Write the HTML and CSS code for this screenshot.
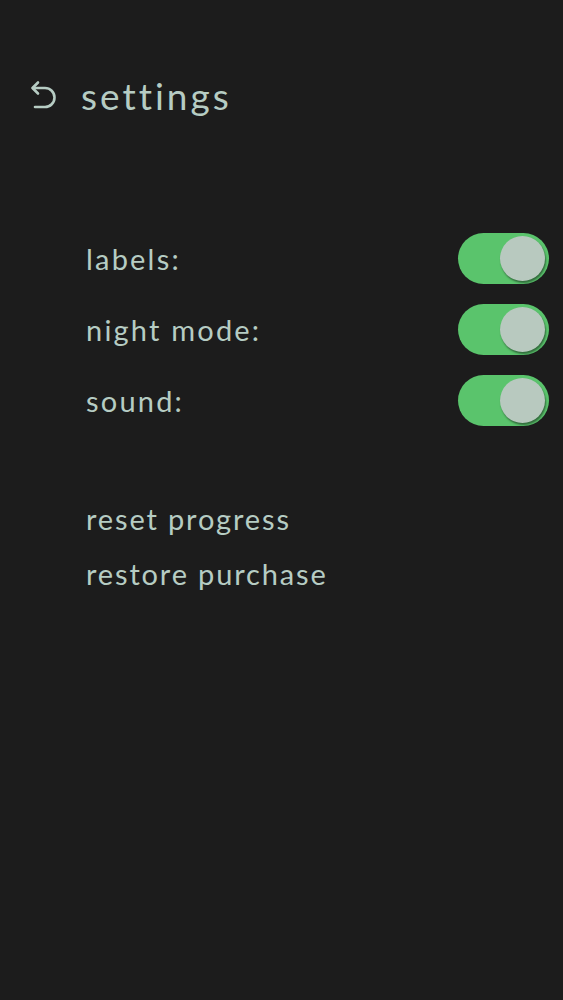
FILE: index.html
```html
<!DOCTYPE html>
<html>
<head>
<meta charset="utf-8">
<title>settings</title>
<link rel="stylesheet" href="styles.css">
</head>
<body>
<div class="screen">
	<div class="head">
		<a href="javascript:;" class="back">
			<svg width="30" height="32" viewBox="0 0 30 32">
				<path d="M4 8 H16 A9.5 9.5 0 0 1 16 27 H6" />
				<path d="M9 2.5 L3.5 8 L9 13.5" />
			</svg>
		</a>
		<h1 class="title">settings</h1>
	</div>

	<ul class="opts">
		<li class="opt">
			<span class="label">labels:</span>
			<span class="switch on"><i></i></span>
		</li>
		<li class="opt">
			<span class="label">night mode:</span>
			<span class="switch on"><i></i></span>
		</li>
		<li class="opt">
			<span class="label">sound:</span>
			<span class="switch on"><i></i></span>
		</li>
	</ul>

	<ul class="links">
		<li><a href="javascript:;">reset progress</a></li>
		<li><a href="javascript:;">restore purchase</a></li>
	</ul>
</div>
</body>
</html>
```

FILE: styles.css
```css
* {padding:0; margin:0;}
html, body {height:100%;}
body {background:#1c1c1c; color:#b6ccc3; font-family:"Lato", "Noto Sans", sans-serif;}
ul {list-style:none;}
a {color:inherit; text-decoration:none;}

.screen {height:100%; display:flex; flex-direction:column;}

.head {display:flex; align-items:center; gap:22px; padding:76px 0 0 29px; height:40px;}
.back {display:flex; width:30px; height:32px;}
.back svg {fill:none; stroke:#b6ccc3; stroke-width:2.6; stroke-linecap:round; stroke-linejoin:round;}
.title {font-size:37px; font-weight:400; letter-spacing:3px; line-height:40px;}

.opts {margin-top:117px; padding:0 14px 0 86px;}
.opt {display:flex; align-items:center; justify-content:space-between; height:51px; margin-bottom:20px;}
.label {font-size:29px; letter-spacing:2.2px; line-height:51px;}

.switch {position:relative; width:91px; height:51px; border-radius:26px; background:#3d3d3d;}
.switch.on {background:#5ac46c;}
.switch i {position:absolute; top:3px; left:3px; width:45px; height:45px; border-radius:50%; background:#b8c9bf; box-shadow:1px 2px 2px rgba(0,0,0,0.45);}
.switch.on i {left:auto; right:4px;}

.links {margin-top:45px; padding-left:86px;}
.links li {font-size:29px; letter-spacing:1.85px; line-height:55px;}
```
